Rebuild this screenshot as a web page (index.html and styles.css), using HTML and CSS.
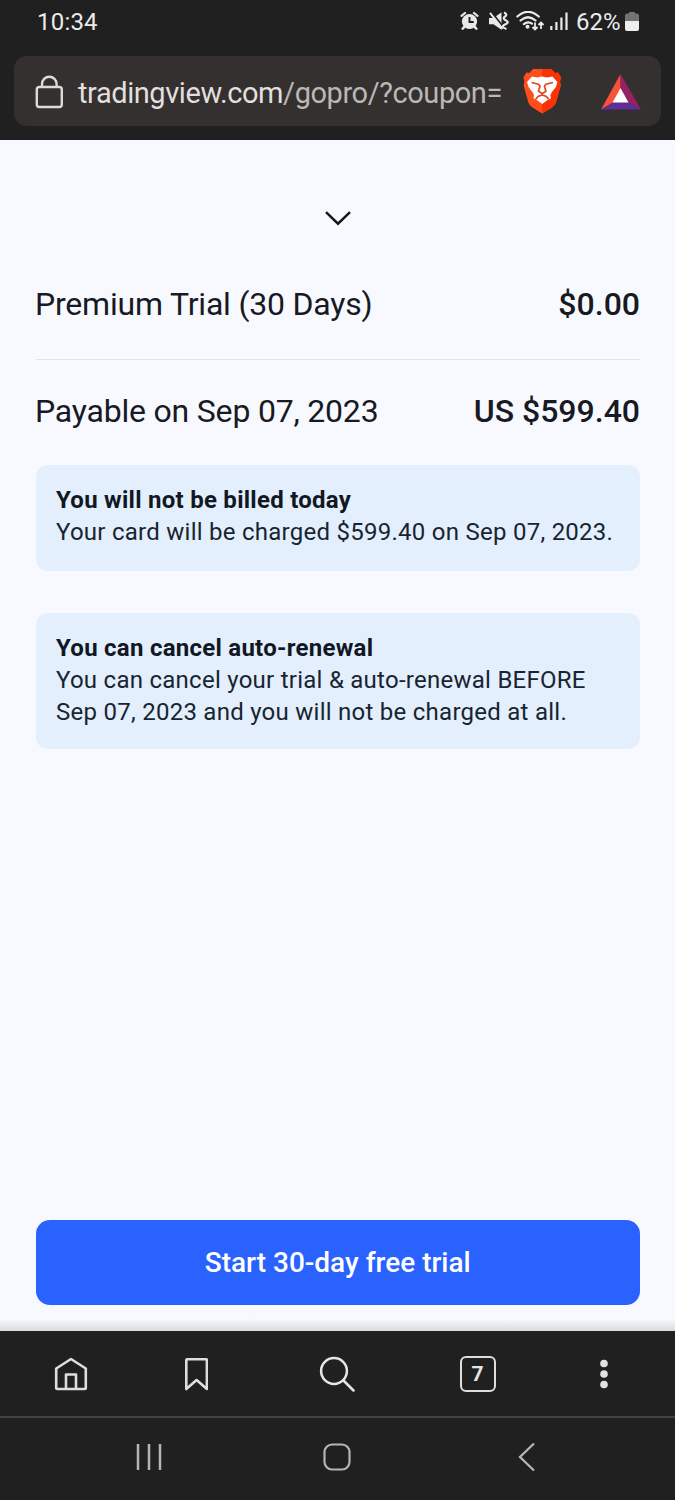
FILE: index.html
```html
<!DOCTYPE html>
<html lang="en">
<head>
<meta charset="utf-8">
<title>Start your free trial</title>
<link rel="stylesheet" href="styles.css">
</head>
<body>
<div class="phone">
  <header class="top">
    <div class="status">
      <span class="clock">10:34</span>
      <div class="status-right">
        <svg class="status-icons" width="108" height="22" viewBox="460 11 108 22">
          <g fill="#e9e9e9">
            <circle cx="469.500" cy="21.500" r="7.600"/>
            <path d="M464 25l2 2-3 3-2-1zM475 25l-2 2 3 3 2-1z"/>
          </g>
          <path d="M461.500 15.800l3.500-2.800M477.500 15.800l-3.500-2.800" stroke="#e9e9e9" stroke-width="2.200" stroke-linecap="round"/>
          <path d="M469.500 17v5h4.200" fill="none" stroke="#202020" stroke-width="1.900"/>
          <path d="M489 18h4.500l8-5.800v17.600l-8-5.500h-4.500z" fill="#e9e9e9"/>
          <path d="M491.500 12l11 14" stroke="#202020" stroke-width="2"/>
          <path d="M490 12.800l12.500 16" stroke="#e9e9e9" stroke-width="2"/>
          <path d="M504 12.500q4 1.800 1 4t1 4-1 4 1.500 4.500" fill="none" stroke="#e9e9e9" stroke-width="2.200"/>
          <g fill="none" stroke="#e9e9e9" stroke-width="2.200" stroke-linecap="round">
            <path d="M517.300 16.500q10.700-9.500 21.500 0M520.500 20.500q7.500-6.500 15 0M523.800 24.100q4.200-3.300 8.200-.5"/>
            <path d="M535 22.500v6.800M532.500 27l2.500 2.500 2.500-2.500M541 29v-5.500M538.500 25l2.500-2.500 2.500 2.500" stroke-width="1.800" stroke-linecap="butt"/>
          </g>
          <circle cx="527.500" cy="26.700" r="2" fill="#e9e9e9"/>
          <path d="M551.300 26v4M556.400 22v8M561.400 17.500v12.500M566.500 12.500v17.500" stroke="#e9e9e9" stroke-width="2.200"/>
        </svg>
        <span class="percent">62%</span>
        <svg class="battery" width="14" height="21" viewBox="0 0 14 21">
          <path d="M4 2.500V1h6v1.500h2a2 2 0 0 1 2 2V10H0V4.500a2 2 0 0 1 2-2z" fill="#737373"/>
          <path d="M0 10h14v8a2 2 0 0 1-2 2H2a2 2 0 0 1-2-2z" fill="#ededed"/>
        </svg>
      </div>
    </div>
    <div class="address">
      <svg class="lock" width="28" height="34" viewBox="0 0 28 34">
        <g fill="none" stroke="#dddbd9" stroke-width="2.400">
          <rect x="1.800" y="12" width="25" height="20" rx="2.500"/>
          <path d="M7 12V9a7.300 7.300 0 0 1 14.600 0v3"/>
        </g>
      </svg>
      <span class="url">tradingview.com<span class="path">/gopro/?coupon=</span></span>
      <svg class="brave" width="40" height="46" viewBox="522 68 40 46">
        <path d="M533 69h18l4 4 3-.5 3 5-1 4 .8 4-4.800 17q-1 3-4 5l-9.800 6-9.800-6q-3-2-4-5l-4.800-17 .8-4-1-4 3-5 3 .5z" fill="#ff4d1c"/>
        <path d="M542.200 69h8.800l4 4 3-.5 3 5-1 4 .8 4-4.800 17q-1 3-4 5l-9.800 6z" fill="#fb3206"/>
        <path d="M532 76.500l5 1 5.200-1 5.200 1 5-1 5 5.500-1.500 5-4 5-1.500 3 .5 3.500-4 2-4.700 3.500-4.700-3.500-4-2 .5-3.500-1.500-3-4-5-1.500-5z" fill="#fff"/>
        <path d="M531.500 82.500l7 1.700 1.500 2-1.500 5 3.700 2.500 3.700-2.500-1.500-5 1.500-2 7-1.700M535.500 99.500l2.500-3 4.200-1.500 4.200 1.500 2.500 3M542.200 93v3" fill="none" stroke="#e0471f" stroke-width="1.700"/>
      </svg>
      <svg class="bat" width="42" height="38" viewBox="0 0 42 38">
        <path d="M20.500 1v15.500L14 29 1 36.500z" fill="#f9503a"/>
        <path d="M20.500 1v15.500L28 29l13 7.500z" fill="#962264"/>
        <path d="M1 36.500L14 29h14l13 7.500z" fill="#602c98"/>
        <path d="M20.500 15L12.500 29.500h16z" fill="#fff"/>
      </svg>
    </div>
  </header>

  <main class="content">
    <svg class="chevron" width="28" height="16" viewBox="0 0 28 16">
      <path d="M2 2.200L14 13.700 26 2.200" fill="none" stroke="#14161f" stroke-width="2.500"/>
    </svg>
    <div class="row trial"><span class="label">Premium Trial (30 Days)</span><b>$0.00</b></div>
    <div class="row payable"><span class="label">Payable on Sep 07, 2023</span><b>US $599.40</b></div>
    <section class="note billed">
      <h2>You will not be billed today</h2>
      <p>Your card will be charged $599.40 on Sep 07, 2023.</p>
    </section>
    <section class="note renewal">
      <h2>You can cancel auto-renewal</h2>
      <p>You can cancel your trial &amp; auto-renewal BEFORE<br>Sep 07, 2023 and you will not be charged at all.</p>
    </section>
    <button class="start">Start 30-day free trial</button>
  </main>

  <nav class="toolbar">
    <svg class="t-home" width="34" height="34" viewBox="54 1357 34 34">
      <path d="M56.200 1368.500L71 1359l14.800 9.500v19.300q0 1.200-1.200 1.200H57.400q-1.200 0-1.200-1.200zM66 1389v-14.500h10V1389" fill="none" stroke="#dedede" stroke-width="2.600" stroke-linejoin="round"/>
    </svg>
    <svg class="t-bookmark" width="24" height="34" viewBox="184 1357 24 34">
      <path d="M186.300 1360q0-.8.800-.8h19q.8 0 .8.800v29l-10.300-9-10.300 9z" fill="none" stroke="#dedede" stroke-width="2.600" stroke-linejoin="round"/>
    </svg>
    <svg class="t-search" width="36" height="36" viewBox="319 1356 36 36">
      <g fill="none" stroke="#e6e6e6" stroke-width="2.500" stroke-linecap="round"><circle cx="334" cy="1371" r="12.900"/><path d="M343.500 1380.500l10 10"/></g>
    </svg>
    <span class="tabs">7</span>
    <svg class="t-more" width="8" height="30" viewBox="0 0 8 30">
      <g fill="#e2e2e2"><circle cx="4" cy="4.500" r="3.800"/><circle cx="4" cy="15" r="3.800"/><circle cx="4" cy="25.500" r="3.800"/></g>
    </svg>
  </nav>
  <footer class="system">
    <svg class="s-recents" width="26" height="28" viewBox="0 0 26 28"><path d="M2 1v26M13 1v26M24 1v26" stroke="#b5b5b5" stroke-width="2.500"/></svg>
    <svg class="s-home" width="28" height="28" viewBox="0 0 28 28"><rect x="1.500" y="1.500" width="25" height="25" rx="7.500" fill="none" stroke="#b5b5b5" stroke-width="2.200"/></svg>
    <svg class="s-back" width="18" height="30" viewBox="0 0 18 30"><path d="M16 1.500L2 15l14 13.500" fill="none" stroke="#b5b5b5" stroke-width="2.300"/></svg>
  </footer>
</div>
</body>
</html>
```
FILE: styles.css
```css
* { box-sizing: border-box; }
body { margin: 0; font-family: Roboto, sans-serif; }
svg { display: block; flex: none; }
.phone { width: 675px; height: 1500px; display: flex; flex-direction: column; background: #f8f9fe; overflow: hidden; }

.top { height: 140px; flex: none; background: #202020; padding: 0 14px; }
.status { height: 56px; display: flex; justify-content: space-between; padding: 7px 22px 0 23px; color: #ececec; font-size: 24px; line-height: 30px; }
.clock { letter-spacing: 0.2px; }
.status-right { display: flex; align-items: flex-start; }
.status-icons { margin-top: 4px; }
.percent { width: 48px; margin-left: 8px; }
.battery { margin-top: 4px; margin-left: 1px; }
.address { width: 647px; height: 70px; border-radius: 13px; background: #33302f; display: flex; align-items: center; padding: 0 20px 0 21px; }
.lock { margin-top: 1px; }
.url { width: 430px; margin-left: 15px; font-size: 29px; letter-spacing: -0.430px; line-height: 40px; color: #e2dfdd; white-space: nowrap; margin-top: 3px; }
.path { color: #bab7b5; }
.brave { margin-left: 14px; }
.bat { margin-left: auto; margin-right: -1px; margin-top: 1px; }

.content { flex: 1; display: flex; flex-direction: column; padding: 70px 35px 26px 35.500px; color: #171923; background: linear-gradient(to bottom, transparent calc(100% - 12px), #d8dade 100%); }
.chevron { align-self: center; }
.row { display: flex; justify-content: space-between; font-size: 32px; line-height: 40px; white-space: nowrap; }
.row b { font-weight: 500; }
.label { letter-spacing: -0.200px; margin-left: -0.500px; }
.trial { margin-top: 58px; height: 76px; border-bottom: 1px solid #e1e3e9; }
.payable { margin-top: 31px; height: 74px; }
.note { border-radius: 12px; background: #e3effd; padding: 19px 20px 0 20.500px; color: #182430; }
.note h2, .note p { margin: 0; font-size: 24px; letter-spacing: 0.260px; line-height: 32px; white-space: nowrap; }
.note h2 { font-weight: 700; color: #111823; }
.billed { height: 106px; }
.renewal { height: 136px; margin-top: 42px; }
.start { margin-top: auto; height: 85px; border: 0; border-radius: 14px; background: #2962ff; color: #fff; font: 500 28px/36px Roboto, sans-serif; }

.toolbar { height: 85px; flex: none; background: #202020; display: flex; align-items: center; padding-left: 54px; }
.t-bookmark { margin-left: 96px; }
.t-search { margin-left: 111px; }
.tabs { margin-left: 104.500px; width: 36px; height: 36px; border: 2.500px solid #dedede; border-radius: 6px; color: #e4e4e4; font-size: 21px; line-height: 32px; font-weight: 700; text-align: center; }
.t-more { margin-left: 104.500px; }
.system { height: 84px; flex: none; background: #202020; border-top: 2px solid #434343; display: flex; align-items: center; padding: 0 0 5px 135.500px; }
.s-home { margin-left: 161.500px; }
.s-back { margin-left: 167px; }
```
